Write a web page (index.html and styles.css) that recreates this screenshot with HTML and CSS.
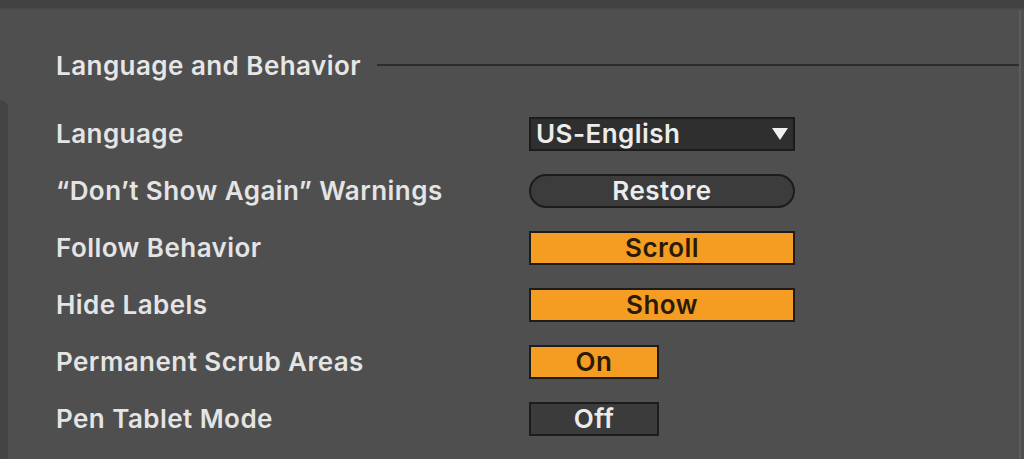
FILE: index.html
```html
<!DOCTYPE html>
<html lang="en">
<head>
    <meta charset="UTF-8">
    <title>Preferences - Look/Feel</title>
    <link rel="stylesheet" href="styles.css">
</head>
<body>
    <div class="topbar"></div>
    <div class="main">
        <div class="side-edge"></div>
        <div class="panel">
            <div class="section-head">
                <h2>Language and Behavior</h2>
                <div class="rule"></div>
            </div>
            <div class="rows">
                <div class="label">Language</div>
                <div class="ctrl">
                    <div class="dropdown">
                        <span>US-English</span>
                        <svg class="caret" width="18" height="14" viewBox="0 0 18 14"><path d="M1 1 L17 1 L9 13 Z" fill="#f0f0f0"/></svg>
                    </div>
                </div>

                <div class="label">&ldquo;Don&rsquo;t Show Again&rdquo; Warnings</div>
                <div class="ctrl"><div class="btn pill">Restore</div></div>

                <div class="label">Follow Behavior</div>
                <div class="ctrl"><div class="btn on wide">Scroll</div></div>

                <div class="label">Hide Labels</div>
                <div class="ctrl"><div class="btn on wide">Show</div></div>

                <div class="label">Permanent Scrub Areas</div>
                <div class="ctrl"><div class="btn on short">On</div></div>

                <div class="label">Pen Tablet Mode</div>
                <div class="ctrl"><div class="btn off short">Off</div></div>
            </div>
        </div>
    </div>
</body>
</html>
```

FILE: styles.css
```css
html, body {
    margin: 0;
    height: 100%;
}
body {
    background-color: #4f4f4f;
    font-family: Inter, "Noto Sans", sans-serif;
    font-weight: 600;
    letter-spacing: 0.45px;
    color: #e4e4e4;
    display: flex;
    flex-direction: column;
    overflow: hidden;
}
.topbar {
    height: 8px;
    background: #414141;
    border-bottom: 2px solid #4a4a4a;
}
.main {
    flex: 1;
    display: flex;
}
.side-edge {
    width: 8px;
    margin-top: 90px;
    background: #444444;
    border-top-right-radius: 8px;
}
.panel {
    flex: 1;
    padding-left: 48px;
    border-right: 2px solid #5c5c5c;
    margin-right: 3px;
}
.section-head {
    display: flex;
    align-items: center;
    margin-top: 39px;
    height: 32px;
}
.section-head h2 {
    margin: 0;
    font-size: 26px;
    font-weight: 600;
    color: #e6e6e6;
}
.rule {
    flex: 1;
    height: 2px;
    background: #2c2c2c;
    margin-left: 16px;
}
.rows {
    display: grid;
    grid-template-columns: 473px auto;
    grid-auto-rows: 57px;
    margin-top: 24px;
}
.label {
    display: flex;
    align-items: center;
    font-size: 26px;
    padding-bottom: 1px;
}
.ctrl {
    display: flex;
    align-items: center;
}
.dropdown {
    background: #2f2f2f;
    border: 2px solid #1c1c1c;
    display: flex;
    align-items: center;
    justify-content: space-between;
    padding: 0 4px 0 5px;
    box-sizing: border-box;
    width: 266px;
    height: 34px;
    font-size: 26px;
    color: #ececec;
}
.btn {
    box-sizing: border-box;
    height: 34px;
    border: 2px solid #1c1c1c;
    display: flex;
    align-items: center;
    justify-content: center;
    font-size: 26px;
}
.pill {
    width: 266px;
    border-radius: 17px;
    background: #3c3c3c;
    color: #ececec;
}
.on {
    background: #f59d22;
    color: #2a1a08;
}
.off {
    background: #3b3b3b;
    color: #ececec;
}
.wide {
    width: 266px;
}
.short {
    width: 130px;
}
```
